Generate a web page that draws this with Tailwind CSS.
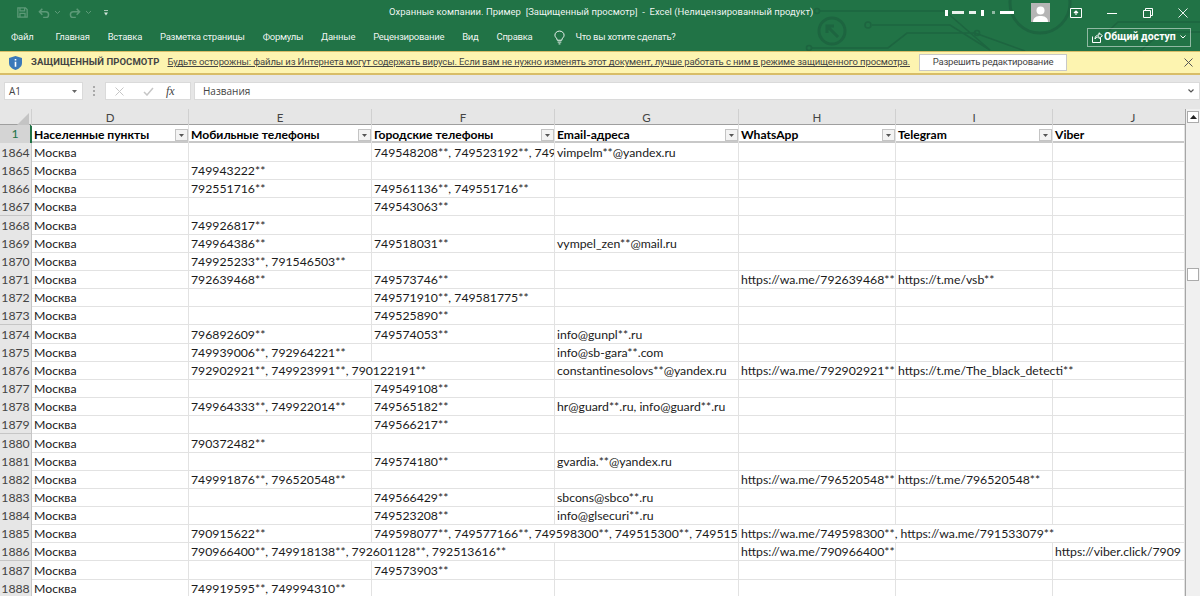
<!DOCTYPE html>
<html lang="ru">
<head>
<meta charset="UTF-8">
<title>Охранные компании. Пример</title>
<script src="https://cdn.jsdelivr.net/npm/@tailwindcss/browser@4"></script>
</head>
<body class="h-[596px] w-[1200px] overflow-hidden bg-[#e6e6e6] font-['Roboto',sans-serif]">

<!-- title bar + tabs -->
<div class="relative h-[51px] bg-[#217346] text-white">
  <svg class="absolute right-0 top-0 h-[51px] w-[400px]" viewBox="0 0 400 51" fill="none" stroke="#1d6540" stroke-width="1.600">
    <circle cx="32" cy="31" r="13" stroke-width="3"/>
    <path d="M38 37 L27 26 M27 33 V26 H34" stroke-width="3"/>
    <path d="M20 11 H145 L190 50 M72 25 H150 L190 50 M12 48 H88 L107 33 H175 L200 42 L225 51"/>
    <circle cx="17" cy="11" r="2.500"/>
    <circle cx="68" cy="25" r="3"/>
    <circle cx="9" cy="48" r="2.500"/>
    <circle cx="177" cy="33" r="2.500"/>
    <circle cx="240" cy="3" r="30" stroke-width="3"/>
    <path d="M295 44 L318 22 H400 M340 51 L362 32 H400"/>
  </svg>

  <div class="relative flex h-[25px] items-center">
    <div class="flex w-[389px] items-center pl-[17px] text-[#5d9a78]">
      <svg class="h-[11px] w-[11px]" viewBox="0 0 13 13" fill="none" stroke="currentColor" stroke-width="1.500"><path d="M1 1H10L12 3V12H1Z M3.500 1V4.500H9V1 M3.500 12V7.500H9.500V12"/></svg>
      <svg class="ml-[10px] h-[10px] w-[12px]" viewBox="0 0 14 12" fill="none" stroke="currentColor" stroke-width="1.800"><path d="M5 1L1.500 4.500L5 8 M2 4.500H9A3.500 3.500 0 0 1 9 11.500H6"/></svg>
      <svg class="ml-[5px] h-[3px] w-[5px]" viewBox="0 0 5 3" fill="none" stroke="currentColor"><path d="M0 0L2.500 2.500L5 0"/></svg>
      <svg class="ml-[9px] h-[10px] w-[12px]" viewBox="0 0 14 12" fill="none" stroke="currentColor" stroke-width="1.800"><path d="M9 1L12.500 4.500L9 8 M12 4.500H5A3.500 3.500 0 0 0 5 11.500H8"/></svg>
      <svg class="ml-[5px] h-[3px] w-[5px]" viewBox="0 0 5 3" fill="none" stroke="currentColor"><path d="M0 0L2.500 2.500L5 0"/></svg>
      <svg class="ml-[13px] h-[6px] w-[4px] text-white/80" viewBox="0 0 5 7" fill="currentColor"><path d="M0 0H5V1H0Z M0 3H5L2.500 6.500Z"/></svg>
    </div>
    <div class="text-[9.500px] whitespace-nowrap text-white/95">Охранные компании. Пример&nbsp; [Защищенный просмотр]&nbsp; -&nbsp; Excel (Нелицензированный продукт)</div>
    <div class="ml-auto flex items-center pr-[12px]">
      <div class="flex items-center gap-[2px]">
        <span class="h-[6px] w-[3px] bg-white"></span><span class="ml-[2px] h-[3px] w-[12px] bg-white/90"></span><span class="ml-[3px] h-[3px] w-[7px] bg-white/90"></span><span class="ml-[3px] h-[6px] w-[3px] bg-white"></span><span class="ml-[6px] h-[3px] w-[3px] bg-white/50"></span><span class="ml-[3px] h-[3px] w-[14px] bg-white"></span>
      </div>
      <div class="ml-[17px] flex h-[19px] w-[19px] items-end justify-center bg-[#b5b5b5]">
        <svg class="h-[17px] w-[17px]" viewBox="0 0 17 17" fill="#fff"><circle cx="8.500" cy="5.500" r="4"/><path d="M1 17C1 12 5 11 8.500 11S16 12 16 17Z"/></svg>
      </div>
      <svg class="ml-[20px] h-[12px] w-[12px]" viewBox="0 0 12 12" fill="none" stroke="#fff"><path d="M.5 1.500H11.500V10.500H.5Z"/><path d="M6 8V4M4 6L6 4L8 6" stroke-width="1.200"/></svg>
      <svg class="ml-[25px] h-[10px] w-[10px]" viewBox="0 0 10 10" stroke="#fff"><path d="M0 5.500H10"/></svg>
      <svg class="ml-[26px] h-[10px] w-[10px]" viewBox="0 0 10 10" fill="none" stroke="#fff"><path d="M.5 2.500H7.500V9.500H.5Z M2.500 2.500V.5H9.500V7.500H7.500"/></svg>
      <svg class="ml-[25px] h-[10px] w-[10px]" viewBox="0 0 11 11" stroke="#fff"><path d="M.5 .5L10.500 10.500M10.500 .5L.5 10.500"/></svg>
    </div>
  </div>

  <div class="relative flex h-[26px] items-center pb-[2px] text-[9.500px] tracking-[-0.27px] text-white/95">
    <div class="flex items-center gap-[18px] pl-[11px] whitespace-nowrap">
      <span>Файл</span><span class="ml-[4px]">Главная</span><span>Вставка</span><span>Разметка страницы</span><span>Формулы</span><span>Данные</span><span>Рецензирование</span><span>Вид</span><span>Справка</span>
      <svg class="ml-[3px] h-[15px] w-[11px]" viewBox="0 0 12 15" fill="none" stroke="#fff"><path d="M3.500 10.500C3.500 8 1 7.500 1 5A5 4.500 0 0 1 11 5C11 7.500 8.500 8 8.500 10.500Z M4 12.500H8 M5 14.500H7"/></svg>
      <span class="-ml-[7px]">Что вы хотите сделать?</span>
    </div>
    <div class="mr-[9px] ml-auto flex h-[19px] w-[104px] items-center border border-white/50 pl-[4px] text-[10.500px] font-bold tracking-normal whitespace-nowrap text-white">
      <svg class="h-[11px] w-[11px] shrink-0" viewBox="0 0 11 11" fill="none" stroke="#fff"><path d="M.5 4.500V10.500H8.500V6 M3 7C3 4 5 3 7 3V.8L10.500 3.800L7 6.500V4.800C5.500 4.800 4 5.500 3 7Z"/></svg>
      <span class="ml-[1px]">Общий доступ</span>
      <svg class="mr-[4px] ml-auto h-[4px] w-[6px] shrink-0" viewBox="0 0 6 4" fill="none" stroke="#fff"><path d="M.5 .5L3 3L5.500 .5"/></svg>
    </div>
  </div>
</div>

<!-- protected view -->
<div class="flex h-[24px] items-center border-t border-b-2 border-t-[#d8bd68] border-b-[#d8bd68] bg-[#fdf4b0] text-[#444]">
  <svg class="ml-[9px] h-[14px] w-[13px] shrink-0" viewBox="0 0 13 14"><path d="M6.500 0L13 2V7C13 10.500 10 12.800 6.500 14C3 12.800 0 10.500 0 7V2Z" fill="#3b79b9"/><path d="M5.700 3H7.300V4.600H5.700Z M5.700 5.800H7.300V10.800H5.700Z" fill="#fff"/></svg>
  <span class="ml-[9px] text-[9.500px] font-bold tracking-[0.1px] whitespace-nowrap">ЗАЩИЩЕННЫЙ ПРОСМОТР</span>
  <span class="ml-[8px] text-[9.500px] tracking-[-0.12px] whitespace-nowrap underline">Будьте осторожны: файлы из Интернета могут содержать вирусы. Если вам не нужно изменять этот документ, лучше работать с ним в режиме защищенного просмотра.</span>
  <div class="ml-auto flex h-[17px] w-[148px] items-center justify-center border border-[#c8c8c8] bg-white text-[9.500px] tracking-[-0.2px] whitespace-nowrap text-[#444]">Разрешить редактирование</div>
  <svg class="mr-[7px] ml-[117px] h-[9px] w-[9px]" viewBox="0 0 9 9" stroke="#555"><path d="M.5 .5L8.500 8.500M8.500 .5L.5 8.500"/></svg>
</div>

<!-- formula bar -->
<div class="flex h-[34px] items-start pt-[7px] text-[#444]">
  <div class="ml-[4px] flex h-[18px] w-[79px] items-center border border-[#dadada] bg-white pl-[4px] font-['Open_Sans',sans-serif] text-[10px]">A1
    <svg class="mr-[5px] ml-auto h-[3px] w-[5px]" viewBox="0 0 5 3" fill="#666"><path d="M0 0H5L2.500 3Z"/></svg>
  </div>
  <div class="ml-[10px] grid h-[18px] w-[3px] content-center gap-[2px]"><span class="h-[2px] w-[2px] bg-[#aaa]"></span><span class="h-[2px] w-[2px] bg-[#aaa]"></span><span class="h-[2px] w-[2px] bg-[#aaa]"></span></div>
  <div class="ml-[9px] flex h-[18px] w-[86px] items-center border border-[#dadada] bg-white">
    <svg class="ml-[9px] h-[9px] w-[9px]" viewBox="0 0 9 9" stroke="#c6c6c6"><path d="M.5 .5L8.500 8.500M8.500 .5L.5 8.500"/></svg>
    <svg class="ml-[19px] h-[9px] w-[11px]" viewBox="0 0 11 9" fill="none" stroke="#c6c6c6" stroke-width="1.500"><path d="M1 5L4 8L10 1"/></svg>
    <span class="ml-[12px] font-['Liberation_Serif',serif] text-[12px] text-[#444] italic">fx</span>
  </div>
  <div class="ml-[3px] flex h-[18px] flex-1 items-center border border-[#dadada] bg-white pl-[8px] font-['Open_Sans',sans-serif] text-[10px]">Названия
    <svg class="mr-[5px] ml-auto h-[4px] w-[6px]" viewBox="0 0 6 4" fill="none" stroke="#555" stroke-width="1.200"><path d="M.5 .5L3 3L5.500 .5"/></svg>
  </div>
</div>

<!-- sheet -->
<div class="flex">
  <div class="w-[1185px] shrink-0 overflow-hidden bg-white font-['Lato',sans-serif] text-[12.250px] text-[#1a1a1a]">
    <div class="grid h-[16px] grid-cols-[32px_157px_183px_183px_184px_157px_157px_132px] border-b border-[#9f9f9f] bg-[#e6e6e6] text-center text-[11.500px] leading-[17px] text-[#444]">
      <div class="relative border-r border-[#d0d0d0]"><svg class="absolute right-[2px] bottom-[1px] h-[12px] w-[12px]" viewBox="0 0 12 12" fill="#c4c4c4"><path d="M12 0V12H0Z"/></svg></div>
      <div class="border-r border-[#d0d0d0]">D</div><div class="border-r border-[#d0d0d0]">E</div><div class="border-r border-[#d0d0d0]">F</div><div class="border-r border-[#d0d0d0]">G</div><div class="border-r border-[#d0d0d0]">H</div><div class="border-r border-[#d0d0d0]">I</div><div class="pl-[28px]">J</div>
    </div>
    <div id="rows"></div>
  </div>
  <div class="relative h-[487px] flex-1 border-l border-[#a6a6a6] bg-[#f0f0f0]">
    <div class="mx-auto mt-[2px] flex h-[12px] w-[12px] items-center justify-center border border-[#ababab] bg-white">
      <svg class="h-[4px] w-[7px]" viewBox="0 0 7 4" fill="#222"><path d="M0 4H7L3.500 0Z"/></svg>
    </div>
    <div class="absolute top-[159px] left-[1px] h-[13px] w-[12px] border border-[#ababab] bg-white"></div>
  </div>
</div>

<script>
  // [row, D, E, F, G, H, I, J]; "+" / "++" in front of a text: it runs over one / two empty columns
  const data = [
    [1864,'Москва','','749548208**, 749523192**, 749','vimpelm**@yandex.ru','','',''],
    [1865,'Москва','749943222**','','','','',''],
    [1866,'Москва','792551716**','749561136**, 749551716**','','','',''],
    [1867,'Москва','','749543063**','','','',''],
    [1868,'Москва','749926817**','','','','',''],
    [1869,'Москва','749964386**','749518031**','vympel_zen**@mail.ru','','',''],
    [1870,'Москва','749925233**, 791546503**','','','','',''],
    [1871,'Москва','792639468**','749573746**','','https://wa.me/792639468**','https://t.me/vsb**',''],
    [1872,'Москва','','749571910**, 749581775**','','','',''],
    [1873,'Москва','','749525890**','','','',''],
    [1874,'Москва','796892609**','749574053**','info@gunpl**.ru','','',''],
    [1875,'Москва','749939006**, 792964221**','','info@sb-gara**.com','','',''],
    [1876,'Москва','+792902921**, 749923991**, 790122191**',null,'constantinesolovs**@yandex.ru','https://wa.me/792902921**','+https://t.me/The_black_detecti**',null],
    [1877,'Москва','','749549108**','','','',''],
    [1878,'Москва','749964333**, 749922014**','749565182**','hr@guard**.ru, info@guard**.ru','','',''],
    [1879,'Москва','','749566217**','','','',''],
    [1880,'Москва','790372482**','','','','',''],
    [1881,'Москва','','749574180**','gvardia.**@yandex.ru','','',''],
    [1882,'Москва','749991876**, 796520548**','','','https://wa.me/796520548**','https://t.me/796520548**',''],
    [1883,'Москва','','749566429**','sbcons@sbco**.ru','','',''],
    [1884,'Москва','','749523208**','info@glsecuri**.ru','','',''],
    [1885,'Москва','790915622**','+749598077**, 749577166**, 749598300**, 749515300**, 749515',null,'++https://wa.me/749598300**, https://wa.me/791533079**',null,null],
    [1886,'Москва','+790966400**, 749918138**, 792601128**, 792513616**',null,'','https://wa.me/790966400**','','https://viber.click/7909'],
    [1887,'Москва','','749573903**','','','',''],
    [1888,'Москва','749919595**, 749994310**','','','','','']
  ];
  const gridCls = 'grid grid-cols-[32px_157px_183px_183px_184px_157px_157px_132px]';
  const cellCls = 'overflow-hidden whitespace-nowrap border-r border-b border-[#e2e2e2] pl-[2px] pt-[1px]';
  const head = ['Населенные пункты','Мобильные телефоны','Городские телефоны','Email-адреса','WhatsApp','Telegram','Viber'];

  let html = '<div class="' + gridCls + ' h-[18px] border-b-2 border-[#c8c8c8] leading-[18px] text-black">'
    + '<div class="border-r-2 border-[#217346] bg-[#d4d4d4] text-center text-[#217346]">1</div>';
  head.forEach((t, i) => {
    html += '<div class="relative overflow-hidden whitespace-nowrap border-r border-[#e2e2e2] pl-[2px] pt-[1px] text-[12.100px] font-bold">' + t
      + (i < 6 ? '<span class="absolute top-[4px] right-0 flex h-[12px] w-[13px] items-center justify-center border border-[#c4c4c4] bg-[#f3f3f3]"><svg class="h-[3px] w-[5px]" viewBox="0 0 5 3" fill="#555"><path d="M0 0H5L2.500 3Z"/></svg></span>' : '')
      + '</div>';
  });
  html += '</div>';

  data.forEach(r => {
    html += '<div class="' + gridCls + ' h-[18.170px] leading-[17px]">'
      + '<div class="border-r border-b border-[#c6c6c6] bg-[#e6e6e6] pt-[1px] text-center text-[#444]">' + r[0] + '</div>';
    r.slice(1).forEach(c => {
      if (c === null) return;
      if (c.startsWith('++')) html += '<div class="col-span-3 ' + cellCls + '">' + c.slice(2) + '</div>';
      else if (c[0] === '+') html += '<div class="col-span-2 ' + cellCls + '">' + c.slice(1) + '</div>';
      else html += '<div class="' + cellCls + '">' + c + '</div>';
    });
    html += '</div>';
  });
  document.getElementById('rows').innerHTML = html;
</script>
</body>
</html>
